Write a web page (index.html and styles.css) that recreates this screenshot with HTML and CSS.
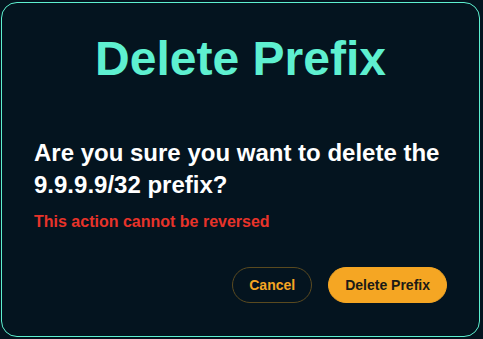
FILE: index.html
```html
<!DOCTYPE html>
<html lang="en">
<head>
<meta charset="utf-8">
<title>Delete Prefix</title>
<link rel="stylesheet" href="styles.css">
</head>
<body>
<div class="dialog">
  <h1 class="title">Delete Prefix</h1>
  <p class="question">Are you sure you want to delete the 9.9.9.9/32 prefix?</p>
  <p class="warning">This action cannot be reversed</p>
  <div class="actions">
    <button class="btn btn-outline">Cancel</button>
    <button class="btn btn-primary">Delete Prefix</button>
  </div>
</div>
</body>
</html>
```
FILE: styles.css
```css
html, body {
  margin: 0;
  background: #04141f;
}
body {
  padding: 2px 3px 2px 1px;
  font-family: "Liberation Sans", Arial, sans-serif;
}
.dialog {
  border: 1px solid #5ef0d0;
  border-radius: 16px;
  padding: 32px 32px 32px 32px;
  height: 335px;
  box-sizing: border-box;
  display: flex;
  flex-direction: column;
}
.title {
  margin: 0;
  font-size: 48px;
  line-height: 48px;
  font-weight: 700;
  color: #5ef0d0;
  text-align: center;
}
.question {
  margin: 54px 0 0 0;
  font-size: 24px;
  line-height: 32px;
  font-weight: 700;
  color: #ffffff;
}
.warning {
  margin: 9px 0 0 0;
  font-size: 16px;
  line-height: 24px;
  font-weight: 700;
  color: #e8332a;
}
.actions {
  margin-top: 33px;
  display: flex;
  justify-content: flex-end;
  gap: 16px;
}
.btn {
  height: 36px;
  padding: 0 16px;
  border-radius: 18px;
  font-family: "Liberation Sans", Arial, sans-serif;
  font-size: 14px;
  font-weight: 700;
  cursor: pointer;
  box-sizing: border-box;
}
.btn-outline {
  background: transparent;
  border: 1px solid #5a4a1f;
  color: #f5a623;
}
.btn-primary {
  background: #f5a623;
  border: 1px solid #f5a623;
  color: #1b1a16;
}
```
